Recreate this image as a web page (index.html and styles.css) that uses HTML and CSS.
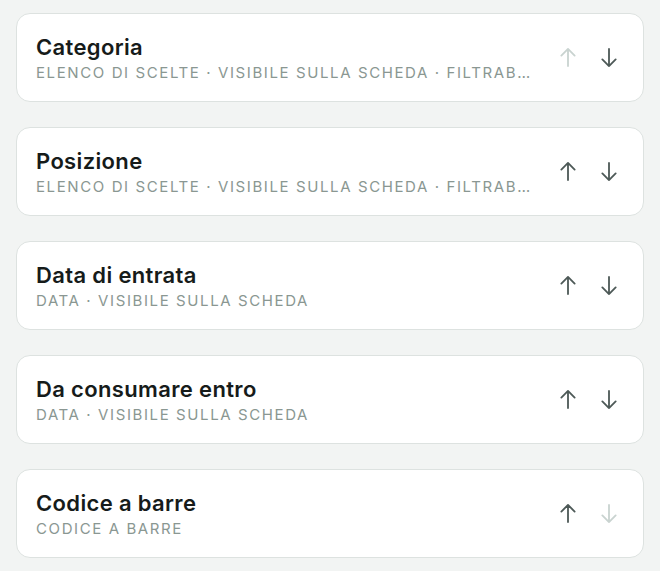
FILE: index.html
```html
<!DOCTYPE html>
<html lang="it">
<head>
<meta charset="utf-8">
<title>Campi</title>
<link rel="stylesheet" href="styles.css">
</head>
<body>
<main class="list">
  <div class="card">
    <div class="info">
      <div class="title">Categoria</div>
      <div class="meta">Elenco di scelte · Visibile sulla scheda · Filtrabile</div>
    </div>
    <div class="actions">
      <button class="btn disabled" aria-label="Sposta su"><svg viewBox="0 0 16 20"><path d="M8 19V1M1 8l7-7 7 7"/></svg></button>
      <button class="btn" aria-label="Sposta giù"><svg viewBox="0 0 16 20"><path d="M8 1v18M1 12l7 7 7-7"/></svg></button>
    </div>
  </div>
  <div class="card">
    <div class="info">
      <div class="title">Posizione</div>
      <div class="meta">Elenco di scelte · Visibile sulla scheda · Filtrabile</div>
    </div>
    <div class="actions">
      <button class="btn" aria-label="Sposta su"><svg viewBox="0 0 16 20"><path d="M8 19V1M1 8l7-7 7 7"/></svg></button>
      <button class="btn" aria-label="Sposta giù"><svg viewBox="0 0 16 20"><path d="M8 1v18M1 12l7 7 7-7"/></svg></button>
    </div>
  </div>
  <div class="card">
    <div class="info">
      <div class="title">Data di entrata</div>
      <div class="meta">Data · Visibile sulla scheda</div>
    </div>
    <div class="actions">
      <button class="btn" aria-label="Sposta su"><svg viewBox="0 0 16 20"><path d="M8 19V1M1 8l7-7 7 7"/></svg></button>
      <button class="btn" aria-label="Sposta giù"><svg viewBox="0 0 16 20"><path d="M8 1v18M1 12l7 7 7-7"/></svg></button>
    </div>
  </div>
  <div class="card">
    <div class="info">
      <div class="title">Da consumare entro</div>
      <div class="meta">Data · Visibile sulla scheda</div>
    </div>
    <div class="actions">
      <button class="btn" aria-label="Sposta su"><svg viewBox="0 0 16 20"><path d="M8 19V1M1 8l7-7 7 7"/></svg></button>
      <button class="btn" aria-label="Sposta giù"><svg viewBox="0 0 16 20"><path d="M8 1v18M1 12l7 7 7-7"/></svg></button>
    </div>
  </div>
  <div class="card">
    <div class="info">
      <div class="title">Codice a barre</div>
      <div class="meta">Codice a barre</div>
    </div>
    <div class="actions">
      <button class="btn" aria-label="Sposta su"><svg viewBox="0 0 16 20"><path d="M8 19V1M1 8l7-7 7 7"/></svg></button>
      <button class="btn disabled" aria-label="Sposta giù"><svg viewBox="0 0 16 20"><path d="M8 1v18M1 12l7 7 7-7"/></svg></button>
    </div>
  </div>
</main>
</body>
</html>
```
FILE: styles.css
```css
html, body {
  margin: 0;
  padding: 0;
  background: #f2f4f3;
  font-family: Inter, "Noto Sans", "Liberation Sans", sans-serif;
}
.list {
  display: flex;
  flex-direction: column;
  gap: 25px;
  padding: 13px 16px 14px;
}
.card {
  display: flex;
  align-items: center;
  height: 89px;
  box-sizing: border-box;
  background: #ffffff;
  border: 1px solid #dde2e0;
  border-radius: 14px;
  padding: 0 14px 0 19px;
}
.info {
  flex: 1;
  min-width: 0;
  padding-right: 12px;
}
.title {
  font-size: 22px;
  font-weight: 600;
  color: #161b1a;
  line-height: 26px;
  letter-spacing: 0.35px;
}
.meta {
  margin-top: 4px;
  font-size: 15px;
  line-height: 18px;
  color: #8a9792;
  text-transform: uppercase;
  letter-spacing: 1.6px;
  white-space: nowrap;
  overflow: hidden;
  text-overflow: ellipsis;
}
.actions {
  display: flex;
  flex-shrink: 0;
}
.btn {
  width: 41px;
  height: 40px;
  padding: 0;
  border: 0;
  background: transparent;
  display: flex;
  align-items: center;
  justify-content: center;
  color: #4d5957;
}
.btn.disabled {
  color: #c9d3d0;
}
.btn svg {
  width: 16px;
  height: 19px;
  fill: none;
  stroke: currentColor;
  stroke-width: 1.9;
  stroke-linecap: round;
  stroke-linejoin: round;
}
```
